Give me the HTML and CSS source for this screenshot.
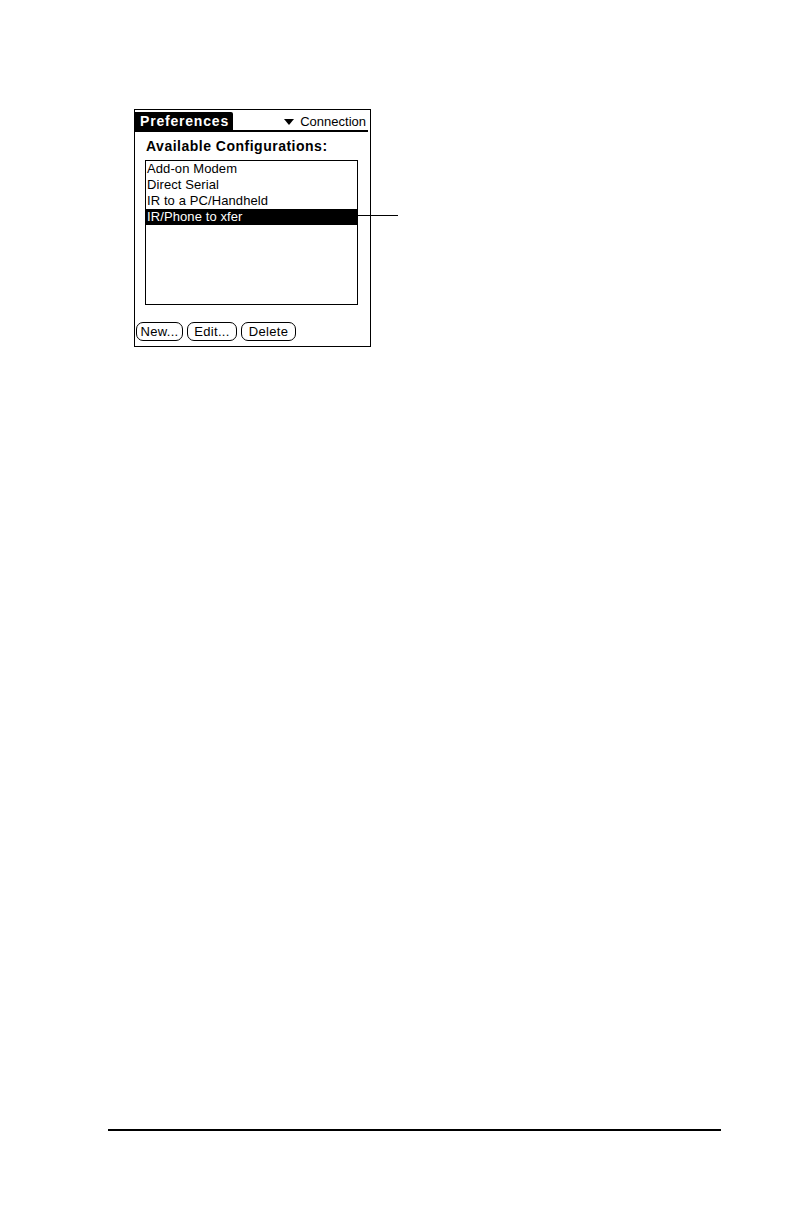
FILE: index.html
```html
<!DOCTYPE html>
<html>
<head>
<meta charset="utf-8">
<link rel="stylesheet" href="styles.css">
</head>
<body>
<div class="page">
  <div class="screen">
    <div class="titlebar">
      <div class="tab">Preferences</div>
      <div class="picker"><span class="tri"></span>Connection</div>
    </div>
    <div class="heading">Available Configurations:</div>
    <div class="list">
      <div class="row">Add-on Modem</div>
      <div class="row">Direct Serial</div>
      <div class="row">IR to a PC/Handheld</div>
      <div class="row selected">IR/Phone to xfer</div>
    </div>
    <div class="buttons">
      <div class="btn btn-new">New...</div>
      <div class="btn btn-edit">Edit...</div>
      <div class="btn btn-del">Delete</div>
    </div>
    <div class="callout"></div>
  </div>
  <div class="footer-rule"></div>
</div>
</body>
</html>
```
FILE: styles.css
```css
html, body {
  margin: 0;
  padding: 0;
  background: #fff;
}
.page {
  width: 792px;
  height: 1224px;
  position: relative;
  overflow: hidden;
  font-family: "Liberation Sans", sans-serif;
  color: #000;
}
.screen {
  position: relative;
  box-sizing: border-box;
  width: 237px;
  height: 238px;
  border: 1px solid #000;
  margin: 109px 0 0 134px;
}
.titlebar {
  display: flex;
  justify-content: space-between;
  align-items: flex-end;
  margin-top: 2px;
  margin-right: 2px;
  border-bottom: 2px solid #000;
  height: 18px;
}
.tab {
  background: #000;
  color: #fff;
  font-family: "Liberation Sans", sans-serif;
  font-weight: bold;
  font-size: 14px;
  letter-spacing: 0.8px;
  height: 18px;
  line-height: 19px;
  width: 98px;
  padding-left: 5px;
  box-sizing: border-box;
  border-top-right-radius: 2px;
}
.picker {
  font-family: "Liberation Sans", sans-serif;
  font-size: 13px;
  line-height: 17px;
  display: flex;
  align-items: center;
  margin-right: 2px;
}
.tri {
  width: 0;
  height: 0;
  border-left: 5px solid transparent;
  border-right: 5px solid transparent;
  border-top: 6px solid #000;
  margin-right: 6px;
  margin-top: 1px;
}
.heading {
  font-family: "Liberation Sans", sans-serif;
  font-weight: bold;
  font-size: 14px;
  letter-spacing: 0.5px;
  margin: 6px 0 0 11px;
  line-height: 16px;
}
.list {
  box-sizing: border-box;
  width: 213px;
  height: 145px;
  border: 1px solid #000;
  margin: 6px 0 0 10px;
}
.row {
  height: 16px;
  line-height: 16px;
  font-family: "Liberation Sans", sans-serif;
  font-size: 13px;
  letter-spacing: 0.1px;
  padding-left: 1px;
  white-space: nowrap;
}
.row.selected {
  background: #000;
  color: #fff;
}
.buttons {
  display: flex;
  gap: 4px;
  margin: 17px 0 0 1px;
}
.btn {
  box-sizing: border-box;
  height: 19px;
  border: 1px solid #000;
  border-radius: 7px;
  font-family: "Liberation Sans", sans-serif;
  font-size: 13px;
  letter-spacing: 0.3px;
  line-height: 17px;
  text-align: center;
}
.btn-new { width: 47px; }
.btn-edit { width: 50px; }
.btn-del { width: 55px; }
.callout {
  position: absolute;
  left: 221px;
  top: 105px;
  width: 42px;
  height: 1px;
  background: #000;
}
.footer-rule {
  position: absolute;
  left: 108px;
  top: 1129px;
  width: 613px;
  height: 1.5px;
  background: #000;
}
```
